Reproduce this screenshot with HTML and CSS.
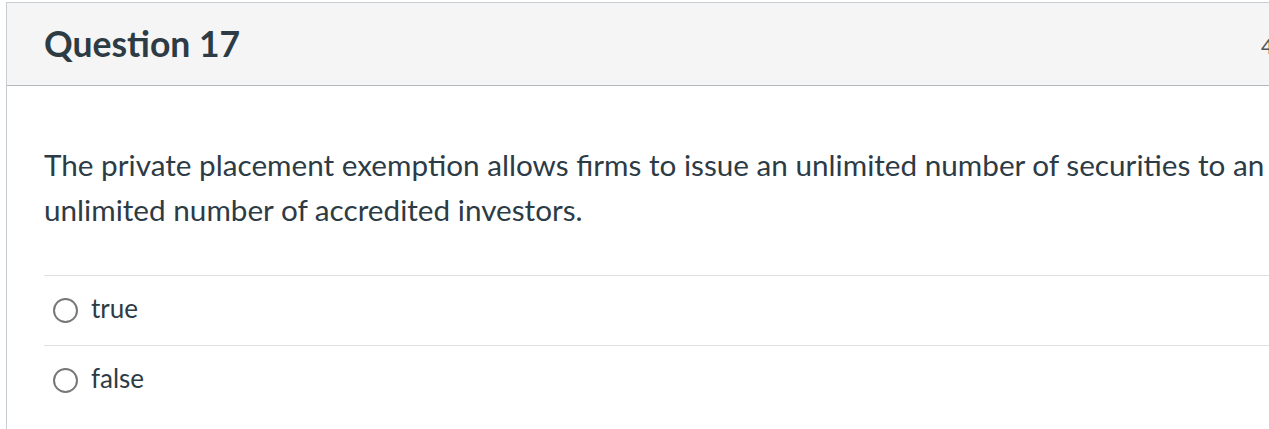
FILE: index.html
```html
<!DOCTYPE html>
<html lang="en">
<head>
<meta charset="utf-8">
<title>Question 17</title>
<link rel="stylesheet" href="styles.css">
</head>
<body>
<div class="question">
  <div class="question-header">
    <h2 class="question-title">Question 17</h2>
    <span class="question-points">4 pts</span>
  </div>
  <div class="question-body">
    <p class="question-text">The private placement exemption allows firms to issue an unlimited number of securities to an unlimited number of accredited investors.</p>
    <div class="answers">
      <label class="answer"><span class="radio"></span><span class="answer-text">true</span></label>
      <label class="answer"><span class="radio"></span><span class="answer-text">false</span></label>
    </div>
  </div>
</div>
</body>
</html>
```

FILE: styles.css
```css
html, body {
  margin: 0;
  padding: 0;
  background: #ffffff;
  overflow: hidden;
}
body {
  font-family: Lato, "Helvetica Neue", Arial, sans-serif;
  color: #2d3b45;
}
.question {
  margin: 2px 0 0 6px;
  width: 1360px;
  min-height: 440px;
  border-top: 1px solid #c7cdd1;
  border-left: 1px solid #c7cdd1;
}
.question-header {
  box-sizing: border-box;
  height: 83px;
  background: #f5f5f5;
  border-bottom: 1px solid #b4b9bd;
  display: flex;
  align-items: center;
  justify-content: space-between;
  padding: 0 0 0 37px;
}
.question-title {
  margin: 0;
  font-size: 35.5px;
  font-weight: 700;
  line-height: 1;
  color: #2d3b45;
}
.question-points {
  font-size: 21px;
  color: #555555;
  width: 106px;
  margin-top: 2px;
}
.question-body {
  padding: 56px 0 0 37px;
}
.question-text {
  margin: 0;
  width: 1260px;
  font-size: 29.7px;
  line-height: 45px;
}
.answers {
  margin-top: 43px;
}
.answer {
  display: flex;
  align-items: center;
  height: 70px;
  border-top: 1px solid #e0e0e0;
  box-sizing: border-box;
}
.radio {
  box-sizing: border-box;
  width: 25px;
  height: 25px;
  border: 2px solid #777777;
  border-radius: 50%;
  margin: 0 13px 0 9px;
  flex: none;
}
.answer-text {
  font-size: 26px;
  margin-bottom: 6px;
}
```
